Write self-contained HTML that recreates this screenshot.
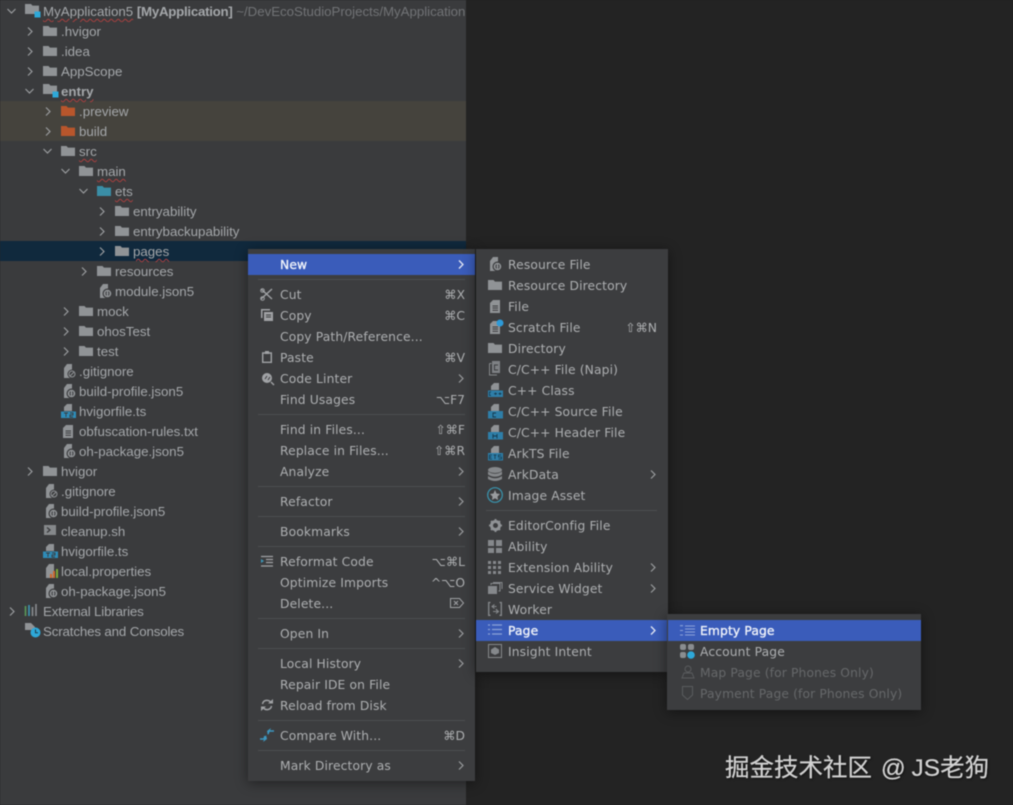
<!DOCTYPE html>
<html><head><meta charset="utf-8"><style>
html,body{margin:0;padding:0;width:1013px;height:805px;overflow:hidden;background:#232323}
body{filter:blur(.4px)}
#p{position:absolute;left:0;top:0;width:466px;height:805px;background:#3a3b3d}
.a{position:absolute}
.t{position:absolute;margin-top:1px;font:13.3px/20px "Liberation Sans",sans-serif;color:#a4a7aa;white-space:nowrap}
.w{text-decoration:underline wavy #a8403f 1px;text-underline-offset:2px}
svg{position:absolute;overflow:visible}
.menu{position:absolute;background:#3c3d3f;box-shadow:0 2px 12px rgba(0,0,0,.45)}
.m{position:absolute;margin-top:1px;font:12.3px/21px "DejaVu Sans",sans-serif;letter-spacing:.13px;color:#adafb1;white-space:nowrap}
.h{position:absolute;background:#3a5cba}
.s{position:absolute;height:1px;background:#4c4e50}
.k{position:absolute;margin-top:1px;font:12.3px/21px "DejaVu Sans",sans-serif;color:#adafb1;white-space:nowrap;text-align:right}
.d{color:#66686a}
.b{color:#f0f3fa;-webkit-text-stroke:.35px #f0f3fa}
</style></head><body>
<svg width="0" height="0" style="position:absolute"><defs>
<symbol id="cr" viewBox="0 0 6 9" overflow="visible"><path d="M1 .5L5 4.5L1 8.5" fill="none" stroke="#9a9c9f" stroke-width="1.2"/></symbol>
<symbol id="cd" viewBox="0 0 9 6" overflow="visible"><path d="M.5 1L4.5 5L8.5 1" fill="none" stroke="#9a9c9f" stroke-width="1.2"/></symbol>
<symbol id="cw" viewBox="0 0 6 9" overflow="visible"><path d="M1 .5L5 4.5L1 8.5" fill="none" stroke="#e4e8f4" stroke-width="1.3"/></symbol>
<symbol id="fo" viewBox="0 0 14 10"><path d="M0 0H5.5L7 1.6H14V10H0Z" fill="#909396"/></symbol>
<symbol id="fr" viewBox="0 0 14 10"><path d="M0 0H5.5L7 1.6H14V10H0Z" fill="#b8562c"/></symbol>
<symbol id="fb" viewBox="0 0 14 10"><path d="M0 0H5.5L7 1.6H14V10H0Z" fill="#3a8ea6"/></symbol>
<symbol id="fm" viewBox="0 0 16 14"><path d="M0 0H6L7.500 1.600H14V10H0Z" fill="#909396"/><rect x="9.500" y="7.500" width="6" height="6" fill="#2ea8d8"/></symbol>
<symbol id="js" viewBox="0 0 14 15"><path d="M4 0H9V14H1V4Z" fill="#909396"/><circle cx="8.500" cy="9.500" r="5" fill="#3a3b3d"/><circle cx="8.500" cy="9.500" r="3.800" fill="#909396"/><path d="M7.500 7.500Q6.500 9.500 7.500 11.500M9.500 7.500Q10.500 9.500 9.500 11.500" stroke="#3a3b3d" fill="none"/></symbol>
<symbol id="gi" viewBox="0 0 14 15"><path d="M4 0H9V14H1V4Z" fill="#909396"/><circle cx="9" cy="10" r="4.500" fill="#3a3b3d"/><circle cx="9" cy="10" r="3" fill="none" stroke="#909396"/><path d="M7 12L11 8" stroke="#909396"/></symbol>
<symbol id="ts" viewBox="0 0 16 15"><path d="M6 0H11V7H3V3Z" fill="#909396"/><rect x="0" y="7.500" width="15" height="6.500" fill="#2e8cb8"/><path d="M3 9H7M5 9V13M9 9H12V11H9V13H12" stroke="#3a3b3d" fill="none" stroke-width=".9"/></symbol>
<symbol id="tx" viewBox="0 0 11 13"><path d="M3 0H10V13H0V3Z" fill="#909396"/><path d="M2.500 6H8M2.500 8H8M2.500 10.200H8" stroke="#3a3b3d"/></symbol>
</defs></svg>
<div id="p"></div>
<div class="a" style="left:0;top:101px;width:466px;height:40px;background:#45433d"></div>
<div class="a" style="left:0;top:241px;width:466px;height:20px;background:#10293d"></div>

<svg style="left:7px;top:8px" width="9" height="6"><use href="#cd"/></svg>
<svg style="left:25px;top:4px" width="16" height="14"><use href="#fm"/></svg>
<div class="t" style="left:43px;top:1px;width:423px;overflow:hidden"><span class="w">MyApplication5</span> <b style="letter-spacing:-.27px">[MyApplication]</b> <span style="color:#717376;letter-spacing:-.03px">~/DevEcoStudioProjects/MyApplication</span></div>

<svg style="left:27px;top:27px" width="6" height="9"><use href="#cr"/></svg><svg style="left:43px;top:26px" width="14" height="10"><use href="#fo"/></svg><div class="t" style="left:61px;top:21px">.hvigor</div>
<svg style="left:27px;top:47px" width="6" height="9"><use href="#cr"/></svg><svg style="left:43px;top:46px" width="14" height="10"><use href="#fo"/></svg><div class="t" style="left:61px;top:41px">.idea</div>
<svg style="left:27px;top:67px" width="6" height="9"><use href="#cr"/></svg><svg style="left:43px;top:66px" width="14" height="10"><use href="#fo"/></svg><div class="t" style="left:61px;top:61px">AppScope</div>
<svg style="left:25px;top:88px" width="9" height="6"><use href="#cd"/></svg><svg style="left:43px;top:84px" width="16" height="14"><use href="#fm"/></svg><div class="t w" style="left:61px;top:81px;font-weight:bold">entry</div>

<svg style="left:45px;top:107px" width="6" height="9"><use href="#cr"/></svg><svg style="left:61px;top:106px" width="14" height="10"><use href="#fr"/></svg><div class="t" style="left:79px;top:101px">.preview</div>
<svg style="left:45px;top:127px" width="6" height="9"><use href="#cr"/></svg><svg style="left:61px;top:126px" width="14" height="10"><use href="#fr"/></svg><div class="t" style="left:79px;top:121px">build</div>
<svg style="left:43px;top:148px" width="9" height="6"><use href="#cd"/></svg><svg style="left:61px;top:146px" width="14" height="10"><use href="#fo"/></svg><div class="t w" style="left:79px;top:141px">src</div>
<svg style="left:61px;top:168px" width="9" height="6"><use href="#cd"/></svg><svg style="left:79px;top:166px" width="14" height="10"><use href="#fo"/></svg><div class="t w" style="left:97px;top:161px">main</div>
<svg style="left:79px;top:188px" width="9" height="6"><use href="#cd"/></svg><svg style="left:97px;top:186px" width="14" height="10"><use href="#fb"/></svg><div class="t w" style="left:115px;top:181px">ets</div>
<svg style="left:99px;top:207px" width="6" height="9"><use href="#cr"/></svg><svg style="left:115px;top:206px" width="14" height="10"><use href="#fo"/></svg><div class="t" style="left:133px;top:201px">entryability</div>
<svg style="left:99px;top:227px" width="6" height="9"><use href="#cr"/></svg><svg style="left:115px;top:226px" width="14" height="10"><use href="#fo"/></svg><div class="t" style="left:133px;top:221px">entrybackupability</div>
<svg style="left:99px;top:247px" width="6" height="9"><use href="#cr"/></svg><svg style="left:115px;top:246px" width="14" height="10"><use href="#fo"/></svg><div class="t w" style="left:133px;top:241px">pages</div>
<svg style="left:81px;top:267px" width="6" height="9"><use href="#cr"/></svg><svg style="left:97px;top:266px" width="14" height="10"><use href="#fo"/></svg><div class="t" style="left:115px;top:261px">resources</div>
<svg style="left:99px;top:284px" width="14" height="15"><use href="#js"/></svg><div class="t" style="left:115px;top:281px">module.json5</div>
<svg style="left:63px;top:307px" width="6" height="9"><use href="#cr"/></svg><svg style="left:79px;top:306px" width="14" height="10"><use href="#fo"/></svg><div class="t" style="left:97px;top:301px">mock</div>
<svg style="left:63px;top:327px" width="6" height="9"><use href="#cr"/></svg><svg style="left:79px;top:326px" width="14" height="10"><use href="#fo"/></svg><div class="t" style="left:97px;top:321px">ohosTest</div>
<svg style="left:63px;top:347px" width="6" height="9"><use href="#cr"/></svg><svg style="left:79px;top:346px" width="14" height="10"><use href="#fo"/></svg><div class="t" style="left:97px;top:341px">test</div>
<svg style="left:63px;top:364px" width="14" height="15"><use href="#gi"/></svg><div class="t" style="left:79px;top:361px">.gitignore</div>
<svg style="left:63px;top:384px" width="14" height="15"><use href="#js"/></svg><div class="t" style="left:79px;top:381px">build-profile.json5</div>
<svg style="left:61px;top:404px" width="16" height="15"><use href="#ts"/></svg><div class="t" style="left:79px;top:401px">hvigorfile.ts</div>
<svg style="left:63px;top:425px" width="11" height="13"><use href="#tx"/></svg><div class="t" style="left:79px;top:421px">obfuscation-rules.txt</div>
<svg style="left:63px;top:444px" width="14" height="15"><use href="#js"/></svg><div class="t" style="left:79px;top:441px">oh-package.json5</div>
<svg style="left:27px;top:467px" width="6" height="9"><use href="#cr"/></svg><svg style="left:43px;top:466px" width="14" height="10"><use href="#fo"/></svg><div class="t" style="left:61px;top:461px">hvigor</div>
<svg style="left:45px;top:484px" width="14" height="15"><use href="#gi"/></svg><div class="t" style="left:61px;top:481px">.gitignore</div>
<svg style="left:45px;top:504px" width="14" height="15"><use href="#js"/></svg><div class="t" style="left:61px;top:501px">build-profile.json5</div>
<svg style="left:44px;top:525px" width="12" height="11"><path d="M0 0H12V10H0Z" fill="#85888b"/><path d="M3 2.500L6 5L3 7.500" stroke="#3a3b3d" fill="none" stroke-width="1.300"/></svg><div class="t" style="left:61px;top:521px">cleanup.sh</div>
<svg style="left:43px;top:544px" width="16" height="15"><use href="#ts"/></svg><div class="t" style="left:61px;top:541px">hvigorfile.ts</div>
<svg style="left:45px;top:564px" width="14" height="15"><path d="M4 0H9V14H1V4Z" fill="#909396"/><path d="M5 14V10H7V14ZM8 14V7H10V14Z" fill="#d0692c"/><path d="M11 14V5H13V14Z" fill="#7ca83a"/></svg><div class="t" style="left:61px;top:561px">local.properties</div>
<svg style="left:45px;top:584px" width="14" height="15"><use href="#js"/></svg><div class="t" style="left:61px;top:581px">oh-package.json5</div>
<svg style="left:9px;top:607px" width="6" height="9"><use href="#cr"/></svg>
<svg style="left:25px;top:604px" width="14" height="13"><path d="M.5 2V12" stroke="#5a9a5a" stroke-width="1.600"/><path d="M4 1V12" stroke="#3c97b8" stroke-width="1.600"/><path d="M7.500 3V12" stroke="#8a8d90" stroke-width="1.600"/><path d="M11 0V12" stroke="#8a8d90" stroke-width="1.600"/></svg>
<div class="t" style="left:43px;top:601px;letter-spacing:-.16px">External Libraries</div>
<svg style="left:25px;top:623px" width="16" height="15"><path d="M0 0H6L10 4V7H0Z" fill="#909396"/><circle cx="10.500" cy="9.500" r="5" fill="#2ea8d8"/><path d="M10.500 6.500V9.700H13" stroke="#1c3b4a" fill="none"/></svg>
<div class="t" style="left:43px;top:621px;letter-spacing:-.14px">Scratches and Consoles</div>

<div class="menu" style="left:248px;top:249px;width:227px;height:532px"></div>
<div class="h" style="left:248px;top:254px;width:227px;height:21px"></div>
<div class="s" style="left:258px;top:279px;width:207px"></div>
<div class="s" style="left:258px;top:414px;width:207px"></div>
<div class="s" style="left:258px;top:486px;width:207px"></div>
<div class="s" style="left:258px;top:516px;width:207px"></div>
<div class="s" style="left:258px;top:546px;width:207px"></div>
<div class="s" style="left:258px;top:618px;width:207px"></div>
<div class="s" style="left:258px;top:648px;width:207px"></div>
<div class="s" style="left:258px;top:720px;width:207px"></div>
<div class="s" style="left:258px;top:750px;width:207px"></div>

<div class="m b" style="left:280px;top:254px">New</div><svg style="left:458px;top:260px" width="6" height="9"><use href="#cw"/></svg>
<svg style="left:260px;top:288px" width="14" height="13"><path d="M1 1L12 11M12 1L1 11" stroke="#a0a2a5" stroke-width="1.400"/><circle cx="2.500" cy="2.500" r="1.800" fill="none" stroke="#a0a2a5"/><circle cx="2.500" cy="10.500" r="1.800" fill="none" stroke="#a0a2a5"/></svg>
<div class="m" style="left:280px;top:284px">Cut</div><div class="k" style="right:548px;top:284px">⌘X</div>
<svg style="left:261px;top:309px" width="12" height="12"><path d="M0 0H9V1.500H1.500V9H0Z" fill="#a0a2a5"/><path d="M3 3H12V12H3Z" fill="#a0a2a5"/><path d="M5 6H10M5 8H10" stroke="#3c3d3f"/></svg>
<div class="m" style="left:280px;top:305px">Copy</div><div class="k" style="right:548px;top:305px">⌘C</div>
<div class="m" style="left:280px;top:326px">Copy Path/Reference...</div>
<svg style="left:262px;top:351px" width="10" height="12"><path d="M.7 2H9.300V11.300H.7Z" fill="none" stroke="#a0a2a5" stroke-width="1.400"/><rect x="3" y="0" width="4" height="3" fill="#a0a2a5"/></svg>
<div class="m" style="left:280px;top:347px">Paste</div><div class="k" style="right:548px;top:347px">⌘V</div>
<svg style="left:261px;top:372px" width="14" height="13"><circle cx="6" cy="6" r="5" fill="#a0a2a5"/><path d="M4 7L6 4M7 8L9 5" stroke="#3c3d3f"/><path d="M10 10L13 13" stroke="#a0a2a5" stroke-width="1.400"/></svg>
<div class="m" style="left:280px;top:368px">Code Linter</div><svg style="left:458px;top:374px" width="6" height="9"><use href="#cr"/></svg>
<div class="m" style="left:280px;top:389px">Find Usages</div><div class="k" style="right:548px;top:389px">⌥F7</div>
<div class="m" style="left:280px;top:419px">Find in Files...</div><div class="k" style="right:548px;top:419px">⇧⌘F</div>
<div class="m" style="left:280px;top:440px">Replace in Files...</div><div class="k" style="right:548px;top:440px">⇧⌘R</div>
<div class="m" style="left:280px;top:461px">Analyze</div><svg style="left:458px;top:467px" width="6" height="9"><use href="#cr"/></svg>
<div class="m" style="left:280px;top:491px">Refactor</div><svg style="left:458px;top:497px" width="6" height="9"><use href="#cr"/></svg>
<div class="m" style="left:280px;top:521px">Bookmarks</div><svg style="left:458px;top:527px" width="6" height="9"><use href="#cr"/></svg>
<svg style="left:261px;top:556px" width="12" height="11"><path d="M0 .5H12M5 3.500H12M5 6.500H12M0 10H12" stroke="#a0a2a5" stroke-width="1.200"/><path d="M0 3L3 5L0 7Z" fill="#3c97b8"/></svg>
<div class="m" style="left:280px;top:551px">Reformat Code</div><div class="k" style="right:548px;top:551px">⌥⌘L</div>
<div class="m" style="left:280px;top:572px">Optimize Imports</div><div class="k" style="right:548px;top:572px">^⌥O</div>
<div class="m" style="left:280px;top:593px">Delete...</div><svg style="left:450px;top:598px" width="14" height="10"><path d="M.5.5H9.500L13.500 5L9.500 9.500H.5Z" fill="none" stroke="#a0a2a5"/><path d="M4 3L8 7M8 3L4 7" stroke="#a0a2a5"/></svg>
<div class="m" style="left:280px;top:623px">Open In</div><svg style="left:458px;top:629px" width="6" height="9"><use href="#cr"/></svg>
<div class="m" style="left:280px;top:653px">Local History</div><svg style="left:458px;top:659px" width="6" height="9"><use href="#cr"/></svg>
<div class="m" style="left:280px;top:674px">Repair IDE on File</div>
<svg style="left:261px;top:699px" width="12" height="12"><path d="M1.500 5A4.500 4.500 0 0 1 10 4M10.500 7A4.500 4.500 0 0 1 2 8" fill="none" stroke="#a0a2a5" stroke-width="1.500"/><path d="M7 4.500H12V0ZM5 7.500H0V12Z" fill="#a0a2a5"/></svg>
<div class="m" style="left:280px;top:695px">Reload from Disk</div>
<svg style="left:260px;top:728px" width="14" height="14"><path d="M0 11H4L5 8" stroke="#3c97c0" stroke-width="1.600" fill="none"/><path d="M8 6L9 3H14" stroke="#3c97c0" stroke-width="1.600" fill="none"/><path d="M3 14L7 11L6 7ZM11 0L7 3L8 7Z" fill="#3c97c0"/></svg>
<div class="m" style="left:280px;top:725px">Compare With...</div><div class="k" style="right:548px;top:725px">⌘D</div>
<div class="m" style="left:280px;top:755px">Mark Directory as</div><svg style="left:458px;top:761px" width="6" height="9"><use href="#cr"/></svg>

<div class="menu" style="left:476px;top:249px;width:192px;height:423px"></div>
<div class="h" style="left:476px;top:620px;width:192px;height:21px"></div>
<div class="s" style="left:486px;top:510px;width:171px"></div>
<svg style="left:489px;top:257px" width="14" height="15"><use href="#js"/></svg><div class="m" style="left:508px;top:254px">Resource File</div>
<svg style="left:488px;top:280px" width="14" height="10"><use href="#fo"/></svg><div class="m" style="left:508px;top:275px">Resource Directory</div>
<svg style="left:490px;top:300px" width="11" height="13"><use href="#tx"/></svg><div class="m" style="left:508px;top:296px">File</div>
<svg style="left:490px;top:321px" width="11" height="13"><use href="#tx"/></svg><svg style="left:496px;top:319px" width="8" height="8"><circle cx="4" cy="4" r="3.500" fill="#2e9ad8"/></svg><div class="m" style="left:508px;top:317px">Scratch File</div><div class="k" style="right:356px;top:317px">⇧⌘N</div>
<svg style="left:488px;top:343px" width="14" height="10"><use href="#fo"/></svg><div class="m" style="left:508px;top:338px">Directory</div>
<svg style="left:489px;top:361px" width="13" height="15"><path d="M.5 2.500H2.500M.5 2.500V14H8" stroke="#85888b" fill="none"/><path d="M3 0H11V12H3Z" fill="#7e8184"/><path d="M9 4H5.500V9H9" stroke="#3c3d3f" fill="none"/></svg><div class="m" style="left:508px;top:359px">C/C++ File (Napi)</div>
<svg style="left:488px;top:383px" width="16" height="15"><path d="M6 0H11V7H3V3Z" fill="#909396"/><rect y="7.500" width="15" height="6.500" fill="#2e7ea8"/><path d="M3 9H1.500V12.500H3M6 10.700H9M7.500 9.500V12M10.500 10.700H13.500M12 9.500V12" stroke="#15384c" fill="none" stroke-width=".8"/></svg><div class="m" style="left:508px;top:380px">C++ Class</div>
<svg style="left:488px;top:404px" width="16" height="15"><path d="M6 0H11V7H3V3Z" fill="#909396"/><rect y="7" width="15" height="7.500" fill="#2e7ea8"/><path d="M8 9H5V13H8" stroke="#15384c" fill="none" stroke-width=".9"/></svg><div class="m" style="left:508px;top:401px">C/C++ Source File</div>
<svg style="left:488px;top:425px" width="16" height="15"><path d="M6 0H11V7H3V3Z" fill="#909396"/><rect y="7" width="15" height="7.500" fill="#2e7ea8"/><path d="M5 9V13.500M9 9V13.500M5 11H9" stroke="#15384c" fill="none" stroke-width=".9"/></svg><div class="m" style="left:508px;top:422px">C/C++ Header File</div>
<svg style="left:488px;top:446px" width="16" height="15"><path d="M6 0H11V7H3V3Z" fill="#909396"/><rect y="7" width="15" height="7.500" fill="#2e7ea8"/><path d="M4 9H1.500V13H4M1.500 11H3.500M5.500 9H8.500M7 9V13M13.500 9H10.500V11H13.500V13H10.500" stroke="#15384c" fill="none" stroke-width=".8"/></svg><div class="m" style="left:508px;top:443px">ArkTS File</div>
<svg style="left:488px;top:467px" width="14" height="15"><ellipse cx="7" cy="3" rx="7" ry="3" fill="#85888b"/><path d="M0 4.500Q7 9 14 4.500V7.500Q7 12 0 7.500ZM0 9Q7 13.500 14 9V12Q7 16 0 12Z" fill="#85888b"/></svg><div class="m" style="left:508px;top:464px">ArkData</div><svg style="left:650px;top:470px" width="6" height="9"><use href="#cr"/></svg>
<svg style="left:487px;top:487px" width="16" height="16"><circle cx="8" cy="8" r="7.300" fill="none" stroke="#3a96b0" stroke-width="1.200"/><path d="M8 3L9.500 6.500L13 7L10.500 9.500L11 13L8 11.200L5 13L5.500 9.500L3 7L6.500 6.500Z" fill="#9a9c9f"/></svg><div class="m" style="left:508px;top:485px">Image Asset</div>
<svg style="left:489px;top:519px" width="13" height="13"><circle cx="6.500" cy="6.500" r="4" fill="none" stroke="#909396" stroke-width="3"/><path d="M6.500 0V13M0 6.500H13M2 2L11 11M11 2L2 11" stroke="#909396" stroke-width="1.800" stroke-dasharray="2.500 8"/></svg><div class="m" style="left:508px;top:515px">EditorConfig File</div>
<svg style="left:488px;top:540px" width="14" height="13"><path d="M0 0H6V6H0ZM8 0H14V6H8ZM0 8H6V13H0ZM8 8H14V13H8Z" fill="#85888b"/></svg><div class="m" style="left:508px;top:536px">Ability</div>
<svg style="left:488px;top:561px" width="14" height="13"><path d="M0 0H3V3H0ZM5 0H8V3H5ZM10 0H13V3H10ZM0 5H3V8H0ZM5 5H8V8H5ZM10 5H13V8H10ZM0 10H3V13H0ZM5 10H8V13H5ZM10 10H13V13H10Z" fill="#85888b"/></svg><div class="m" style="left:508px;top:557px">Extension Ability</div><svg style="left:650px;top:563px" width="6" height="9"><use href="#cr"/></svg>
<svg style="left:488px;top:582px" width="14" height="13"><path d="M0 4H9V12H0Z" fill="#85888b"/><path d="M3 3V1.500H12V9H10.500M5.500 1V.5H14V7" stroke="#85888b" fill="none"/></svg><div class="m" style="left:508px;top:578px">Service Widget</div><svg style="left:650px;top:584px" width="6" height="9"><use href="#cr"/></svg>
<svg style="left:488px;top:602px" width="14" height="14"><path d="M2.500.5H.7V13.300H2.500M11.500.5H13.300V13.300H11.500" stroke="#85888b" fill="none" stroke-width="1.300"/><path d="M4 4.500H8.500M8 7L10 9.500H5M6.500 2.500L4 4.500L6.500 6.500M8 7.500L10.500 9.500L8 11.500" stroke="#85888b" fill="none" stroke-width="1.100"/></svg><div class="m" style="left:508px;top:599px">Worker</div>
<svg style="left:488px;top:624px" width="14" height="12"><path d="M0 1H2M0 5.500H2M0 10H2M4 1H14M4 5.500H14M4 10H14" stroke="#8ca2d8" stroke-width="1.300"/></svg><div class="m b" style="left:508px;top:620px">Page</div><svg style="left:650px;top:626px" width="6" height="9"><use href="#cw"/></svg>
<svg style="left:488px;top:644px" width="14" height="14"><rect x=".5" y=".5" width="13" height="13" fill="none" stroke="#85888b"/><path d="M7 3L11 5.500V9L7 11L3 9V5.500Z" fill="#85888b"/></svg><div class="m" style="left:508px;top:641px">Insight Intent</div>

<div class="menu" style="left:667px;top:614px;width:254px;height:96px"></div>
<div class="h" style="left:668px;top:620px;width:253px;height:21px"></div>
<svg style="left:680px;top:625px" width="15" height="11"><path d="M0 .7H3M0 5.500H3M0 10H3M5 1H15M5 4H15M5 7H15M5 10H15" stroke="#8ca2d8" stroke-width="1.100"/></svg><div class="m b" style="left:700px;top:620px">Empty Page</div>
<svg style="left:680px;top:644px" width="16" height="15"><rect width="6" height="6" rx="2" fill="#8a8d90"/><rect x="8" width="6" height="6" rx="2" fill="#8a8d90"/><rect y="8" width="6" height="6" rx="2" fill="#8a8d90"/><circle cx="11" cy="11" r="3.800" fill="#2ea8d8"/></svg><div class="m" style="left:700px;top:641px">Account Page</div>
<svg style="left:682px;top:665px" width="12" height="14"><circle cx="6" cy="4" r="3" fill="none" stroke="#5a5c5e"/><path d="M0 13L2 8H10L12 13Z" fill="none" stroke="#5a5c5e"/></svg><div class="m d" style="left:700px;top:662px">Map Page (for Phones Only)</div>
<svg style="left:682px;top:686px" width="11" height="14"><path d="M.5.5H10.500V9L5.500 13.500L.5 9Z" fill="none" stroke="#5a5c5e"/></svg><div class="m d" style="left:700px;top:683px">Payment Page (for Phones Only)</div>

<div class="a" style="left:725px;top:751px;font:24.500px/36px 'Liberation Sans','Noto Sans CJK SC',sans-serif;color:#d2d2d2;white-space:nowrap;-webkit-text-stroke:.2px #d2d2d2;text-shadow:1px 1px 2px rgba(0,0,0,.6)">掘金技术社区 <span style="margin-left:2px;margin-right:-1px">@</span> JS老狗</div>
</body></html>
